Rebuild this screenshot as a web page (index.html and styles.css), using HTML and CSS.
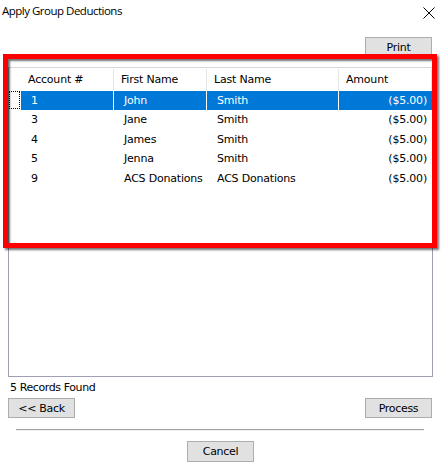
FILE: index.html
```html
<!DOCTYPE html>
<html>
	<head>
		<meta charset="utf-8">
		<title>Apply Group Deductions</title>
		<link rel="stylesheet" href="styles.css">
	</head>
	<body>
		<div class="titlebar">
			<span class="title">Apply Group Deductions</span>
			<svg class="close" width="12" height="12" viewBox="0 0 12 12">
				<path d="M0.5 0.5 L11.5 11.5 M11.5 0.5 L0.5 11.5" stroke="#000" stroke-width="1" fill="none"/>
			</svg>
		</div>

		<div class="toolbar">
			<button class="btn">Print</button>
		</div>

		<div class="grid-wrap">
			<div class="grid">
				<div class="row head">
					<div class="sel"></div>
					<div class="cell">Account #</div>
					<div class="cell">First Name</div>
					<div class="cell">Last Name</div>
					<div class="cell">Amount</div>
				</div>
				<div class="row active">
					<div class="sel"><span class="focus"></span></div>
					<div class="cell">1</div>
					<div class="cell">John</div>
					<div class="cell">Smith</div>
					<div class="cell num">($5.00)</div>
				</div>
				<div class="row">
					<div class="sel"></div>
					<div class="cell">3</div>
					<div class="cell">Jane</div>
					<div class="cell">Smith</div>
					<div class="cell num">($5.00)</div>
				</div>
				<div class="row">
					<div class="sel"></div>
					<div class="cell">4</div>
					<div class="cell">James</div>
					<div class="cell">Smith</div>
					<div class="cell num">($5.00)</div>
				</div>
				<div class="row">
					<div class="sel"></div>
					<div class="cell">5</div>
					<div class="cell">Jenna</div>
					<div class="cell">Smith</div>
					<div class="cell num">($5.00)</div>
				</div>
				<div class="row">
					<div class="sel"></div>
					<div class="cell">9</div>
					<div class="cell">ACS Donations</div>
					<div class="cell">ACS Donations</div>
					<div class="cell num">($5.00)</div>
				</div>
			</div>
			<!-- highlight box drawn over the grid -->
			<div class="highlight"></div>
		</div>

		<div class="status">5 Records Found</div>

		<div class="actions">
			<button class="btn">&lt;&lt; Back</button>
			<button class="btn">Process</button>
		</div>

		<div class="sep"></div>

		<div class="footer">
			<button class="btn cancel">Cancel</button>
		</div>
	</body>
</html>
```

FILE: styles.css
```css
* {margin:0; padding:0; box-sizing:border-box;}
body{
	width:441px;
	height:471px;
	background:#fff;
	font-family:"DejaVu Sans", Tahoma, sans-serif;
	font-size:11px;
	color:#000;
	overflow:hidden;
}
.titlebar{
	height:22px;
	display:flex;
	align-items:center;
	justify-content:space-between;
	padding:0 6px 0 2px;
}
.title{
	font-family:"Open Sans", "Noto Sans", sans-serif;
	font-size:11.5px;
	letter-spacing:-0.5px;
	margin-top:-2px;
}
.close{margin-top:4px;}

.btn{
	width:67px;
	height:20px;
	background:#e1e1e1;
	border:1px solid #adadad;
	font-family:"DejaVu Sans", Tahoma, sans-serif;
	font-size:11px;
	letter-spacing:-0.3px;
	color:#000;
}
.toolbar{
	display:flex;
	justify-content:flex-end;
	margin-top:15px;
	padding-right:9px;
}

.grid-wrap{
	position:relative;
	margin:10px 8px 0 8px;
	height:310px;
}
.grid{
	height:100%;
	border:1px solid #a0a0b4;
	border-top-color:#d8d8d8;
	padding-top:1px;
}
.row{
	display:grid;
	grid-template-columns:12px 93px 93px 132px 93px;
	height:19.5px;
	align-items:center;
	letter-spacing:-0.2px;
}
.row.head{height:21.5px;}
.head .cell{
	height:100%;
	display:flex;
	align-items:center;
	padding-left:7px;
	border-right:1px solid #e5e5e5;
}
.cell{
	padding-left:10px;
	white-space:nowrap;
	overflow:hidden;
	height:100%;
	display:flex;
	align-items:center;
}
.cell.num{
	justify-content:flex-end;
	padding-right:5px;
}
.sel{height:100%; position:relative;}
.active .cell{
	background:#0078d7;
	color:#fff;
	border-right:1px solid #fff;
}
.active .cell:last-child{border-right:0;}
.focus{
	position:absolute;
	left:0;
	top:0;
	width:11px;
	height:18px;
	border:1px dotted #000;
}

.highlight{
	position:absolute;
	left:-5px;
	top:-13px;
	width:434px;
	height:194px;
	border:5px solid #ff0000;
	box-shadow:2px 2px 2px rgba(0,0,0,0.55), inset 2px 2px 2px rgba(0,0,0,0.55);
}

.status{
	margin-top:4px;
	padding-left:10px;
	height:13px;
	line-height:13px;
	letter-spacing:-0.4px;
}
.actions{
	display:flex;
	justify-content:space-between;
	margin-top:4px;
	padding:0 9px 0 8px;
}
.sep{
	margin:11px 17px 0 16px;
	border-top:1px solid #a0a0a0;
	border-bottom:1px solid #f0f0f0;
}
.footer{
	display:flex;
	justify-content:center;
	margin-top:10px;
}
.cancel{height:21px;}
```
